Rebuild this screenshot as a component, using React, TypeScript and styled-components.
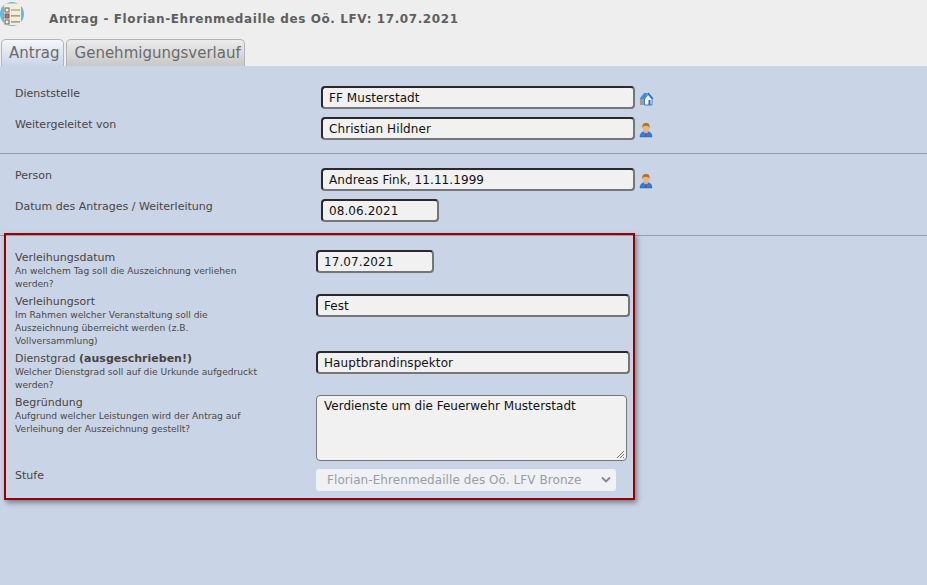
import React from "react";
import styled, { createGlobalStyle } from "styled-components";

const Global = createGlobalStyle`
  html, body { margin: 0; padding: 0; height: 100%; background: #c9d5e7; }
  body { font-family: "DejaVu Sans", Verdana, sans-serif; overflow: hidden; }
  * { box-sizing: border-box; }
`;

const Page = styled.div`
  width: 927px;
  height: 585px;
  display: flex;
  flex-direction: column;
`;

const Top = styled.header`
  background: #eeeeee;
  height: 66px;
  display: flex;
  flex-direction: column;
`;

const TitleRow = styled.div`
  height: 39px;
  display: flex;
  align-items: flex-start;
  gap: 25px;
`;

const Logo = styled.svg`
  width: 24px;
  height: 24px;
  margin-top: 2px;
  flex: none;
`;

const Title = styled.h1`
  margin: 12px 0 0;
  font-size: 12px;
  line-height: 14px;
  font-weight: 700;
  color: #5f5f5f;
  letter-spacing: 0.59px;
`;

const Tabs = styled.nav`
  height: 27px;
  padding-left: 1px;
  display: flex;
  align-items: flex-end;
  gap: 2px;
`;

const Tab = styled.div<{ $active?: boolean }>`
  height: 27px;
  padding: 0 3px 0 ${(p) => (p.$active ? 7 : 8)}px;
  border: 1px solid #b4b4b4;
  border-bottom: none;
  border-radius: 5px 5px 0 0;
  font-size: 15px;
  line-height: 26px;
  color: #6b6b6b;
  background: ${(p) =>
    p.$active
      ? "linear-gradient(#f4f6fa, #c9d5e7)"
      : "linear-gradient(#ececec, #c8c8c8)"};
`;

const Body = styled.main`
  flex: 1;
  background: #c9d5e7;
  padding-top: 20px;
`;

const Row = styled.div<{ $h: number }>`
  height: ${(p) => p.$h}px;
  padding-left: 15px;
  display: grid;
  grid-template-columns: 306px auto 1fr;
  align-items: start;
`;

const Label = styled.div`
  font-size: 11px;
  line-height: 14px;
  color: #4a4440;
  padding-top: 1px;
`;

const Field = styled.div<{ $w: number }>`
  width: ${(p) => p.$w}px;
  height: 23px;
  padding-left: 6px;
  background: #f1f1f1;
  border: 2px solid;
  border-color: #2a2a2a #767676 #767676 #2a2a2a;
  border-radius: 4px;
  font-size: 12px;
  line-height: 21px;
  color: #111;
  letter-spacing: 0.08px;
`;

const Icon = styled.svg`
  width: 16px;
  height: 16px;
  margin: 5px 0 0 3px;
`;

const Rule = styled.hr`
  margin: 0;
  border: none;
  height: 1px;
  background: #979da6;
`;

const Gap = styled.div<{ $h: number }>`
  height: ${(p) => p.$h}px;
`;

const Highlight = styled.section`
  margin: -3px 0 0 4px;
  width: 631px;
  height: 267px;
  padding: 15px 0 0 9px;
  border: 2px solid #960000;
  box-shadow: 2px 3px 5px rgba(60, 60, 70, 0.55);
  display: flex;
  flex-direction: column;
`;

const HRow = styled.div<{ $h: number }>`
  height: ${(p) => p.$h}px;
  display: grid;
  grid-template-columns: 301px 1fr;
  align-items: start;
`;

const LabelBlock = styled.div`
  width: 250px;
  white-space: nowrap;
`;

const Main = styled.div`
  font-size: 11px;
  line-height: 14px;
  color: #4a4440;
  padding-top: 1px;
  b { font-weight: 700; }
`;

const Hint = styled.div`
  font-size: 9.15px;
  line-height: 13px;
  color: #4d4845;
`;

const TextArea = styled.div`
  width: 311px;
  height: 66px;
  padding: 3px 7px;
  background: #f1f1f1;
  border: 1px solid #767676;
  border-radius: 4px;
  font-size: 12px;
  line-height: 15px;
  color: #111;
  position: relative;
`;

const Grip = styled.svg`
  position: absolute;
  right: 1px;
  bottom: 1px;
  width: 9px;
  height: 9px;
`;

const Select = styled.div`
  width: 300px;
  height: 22px;
  margin-top: 1px;
  padding: 0 0 1px 11px;
  background: #eff1f4;
  border-radius: 3px;
  display: flex;
  align-items: center;
  justify-content: space-between;
  font-size: 12px;
  color: #9a9da3;
  letter-spacing: 0.07px;
`;

const Chevron = styled.svg`
  width: 10px;
  height: 7px;
  margin-right: 5px;
`;

const HomeIcon = () => (
  <Icon viewBox="0 0 16 16">
    <rect x="2" y="8" width="6" height="6" fill="#9c9c9c" />
    <path d="M6.500 8 L10 3.500 L14 8 V14 H6.500 Z" fill="#f6f8fb" stroke="#2f74c4" strokeWidth="0.9" />
    <path d="M1.500 8 L6 2 H10 L6.800 8 Z" fill="#3f8fdd" />
    <path d="M10 2 L15 7.800" stroke="#1f68bd" strokeWidth="1.200" fill="none" />
    <rect x="10.500" y="9" width="2" height="5" fill="#2b6fc0" />
  </Icon>
);

const PersonIcon = () => (
  <Icon viewBox="0 0 16 16">
    <path d="M2 15 C2 11.500 3.500 10.500 6 9.500 H10 C12.500 10.500 14 11.500 14 15 Z" fill="#2482e6" stroke="#1b62b4" strokeWidth="0.5" />
    <path d="M5.500 9.500 L8 12 L10.500 9.500 Z" fill="#dfe9f5" />
    <path d="M7.300 10.500 H8.700 L8.800 15 H7.200 Z" fill="#d0301c" />
    <rect x="4.800" y="3" width="6.400" height="6.500" rx="2" fill="#f0b47c" />
    <path d="M4.300 6 C4 1.500 6 1 8 1 C10.500 1 12 2 11.700 6 C11 4.500 10 3.800 8 3.800 C6 3.800 5 4.500 4.300 6 Z" fill="#b0741f" />
  </Icon>
);

export default function App() {
  return (
    <Page>
      <Global />
      <Top>
        <TitleRow>
          <Logo viewBox="0 0 24 24">
            <circle cx="12" cy="12" r="12" fill="#63b8e8" />
            <rect x="4" y="1.500" width="17" height="21.500" rx="1" fill="#f6ecd8" />
            <rect x="5" y="6" width="4" height="4" fill="none" stroke="#666" />
            <rect x="5" y="12" width="4" height="4" fill="#e0605c" stroke="#666" />
            <rect x="5" y="18" width="4" height="4" fill="none" stroke="#666" />
            <path d="M11 8h9M11 13.800h9M11 19.800h9" stroke="#8a8a80" strokeWidth="1.200" />
          </Logo>
          <Title>Antrag - Florian-Ehrenmedaille des Oö. LFV: 17.07.2021</Title>
        </TitleRow>
        <Tabs>
          <Tab $active>Antrag</Tab>
          <Tab>Genehmigungsverlauf</Tab>
        </Tabs>
      </Top>
      <Body>
        <Row $h={31}>
          <Label>Dienststelle</Label>
          <Field $w={314}>FF Musterstadt</Field>
          <HomeIcon />
        </Row>
        <Row $h={32}>
          <Label>Weitergeleitet von</Label>
          <Field $w={314}>Christian Hildner</Field>
          <PersonIcon />
        </Row>
        <Gap $h={4} />
        <Rule />
        <Gap $h={14} />
        <Row $h={31}>
          <Label>Person</Label>
          <Field $w={314}>Andreas Fink, 11.11.1999</Field>
          <PersonIcon />
        </Row>
        <Row $h={30}>
          <Label>Datum des Antrages / Weiterleitung</Label>
          <Field $w={118}>08.06.2021</Field>
        </Row>
        <Gap $h={6} />
        <Rule />
        <Highlight>
          <HRow $h={44}>
            <LabelBlock>
              <Main>Verleihungsdatum</Main>
              <Hint>An welchem Tag soll die Auszeichnung verliehen<br />werden?</Hint>
            </LabelBlock>
            <Field $w={118}>17.07.2021</Field>
          </HRow>
          <HRow $h={57}>
            <LabelBlock>
              <Main>Verleihungsort</Main>
              <Hint>Im Rahmen welcher Veranstaltung soll die<br />Auszeichnung überreicht werden (z.B.<br />Vollversammlung)</Hint>
            </LabelBlock>
            <Field $w={314}>Fest</Field>
          </HRow>
          <HRow $h={44}>
            <LabelBlock>
              <Main>Dienstgrad <b>(ausgeschrieben!)</b></Main>
              <Hint>Welcher Dienstgrad soll auf die Urkunde aufgedruckt<br />werden?</Hint>
            </LabelBlock>
            <Field $w={314}>Hauptbrandinspektor</Field>
          </HRow>
          <HRow $h={73}>
            <LabelBlock>
              <Main>Begründung</Main>
              <Hint>Aufgrund welcher Leistungen wird der Antrag auf<br />Verleihung der Auszeichnung gestellt?</Hint>
            </LabelBlock>
            <TextArea>
              Verdienste um die Feuerwehr Musterstadt
              <Grip viewBox="0 0 9 9"><path d="M1 8 L8 1 M4 8 L8 4 M7 8 L8 7" stroke="#555" strokeWidth="0.8" /></Grip>
            </TextArea>
          </HRow>
          <HRow $h={24}>
            <Main>Stufe</Main>
            <Select>
              Florian-Ehrenmedaille des Oö. LFV Bronze
              <Chevron viewBox="0 0 10 7"><path d="M1 1.500 L5 5.500 L9 1.500" fill="none" stroke="#85888e" strokeWidth="1.800" /></Chevron>
            </Select>
          </HRow>
        </Highlight>
      </Body>
    </Page>
  );
}
